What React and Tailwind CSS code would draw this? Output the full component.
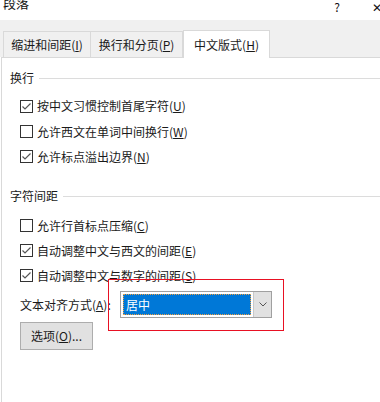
import React from 'react'

const font = { fontFamily: '"Noto Sans CJK SC", "Noto Sans", sans-serif' }

function Box({ checked }) {
  return (
    <svg width="13" height="13" viewBox="0 0 13 13" className="shrink-0">
      <rect x="0.5" y="0.5" width="12" height="12" fill="#fff" stroke="#333" />
      {checked && (
        <polyline points="2.5,6.5 5,9 10.5,3.5" fill="none" stroke="#555" strokeWidth="1.2" />
      )}
    </svg>
  )
}

function Row({ checked, text, k, h }) {
  return (
    <div className={`flex items-center gap-[4px] pl-[18px] ${h}`}>
      <Box checked={checked} />
      <span className="text-[12px] leading-[16px] text-[#1a1a1a]">
        {text}(<u className="underline-offset-1">{k}</u>)
      </span>
    </div>
  )
}

function Heading({ children, mt }) {
  return (
    <div className={`flex items-center gap-[5px] pl-[8px] h-[16px] ${mt}`}>
      <span className="text-[12px] leading-[16px] text-[#1a1a1a]">{children}</span>
      <div className="flex-1 h-px bg-[#dcdcdc]" />
    </div>
  )
}

export default function App() {
  return (
    <div className="relative w-[380px] h-[402px] overflow-hidden bg-white" style={font}>
      {/* title bar */}
      <div className="h-[20px] flex items-start justify-between text-[12px] leading-[16px] text-[#111]">
        <span className="pl-[3px] -mt-[5px] text-[13px]">段落</span>
        <div className="flex gap-[32px] -mt-[1px]">
          <span>?</span>
          <span className="-mr-[2px]">✕</span>
        </div>
      </div>

      {/* tabs */}
      <div className="h-[37px] bg-[#f0f0f0] flex items-end pl-[3px]">
        <div className="h-[26px] w-[88px] border border-b-0 border-[#d9d9d9] flex items-center justify-center text-[12px] text-[#1a1a1a]">
          缩进和间距(<u>I</u>)
        </div>
        <div className="h-[26px] w-[92px] border border-l-0 border-b-0 border-[#d9d9d9] flex items-center justify-center text-[12px] text-[#1a1a1a]">
          换行和分页(<u>P</u>)
        </div>
        <div className="h-[28px] w-[87px] -mb-px bg-white border border-b-0 border-[#d9d9d9] flex items-center justify-center text-[12px] text-[#1a1a1a] relative z-10">
          中文版式(<u>H</u>)
        </div>
      </div>

      {/* panel */}
      <div className="h-[345px] border-t border-l border-[#d9d9d9] ml-px pt-[12px]">
        <Heading>换行</Heading>
        <div className="mt-[7px]">
          <Row checked text="按中文习惯控制首尾字符" k="U" h="h-[26px]" />
          <Row text="允许西文在单词中间换行" k="W" h="h-[25px]" />
          <Row checked text="允许标点溢出边界" k="N" h="h-[25px]" />
        </div>
        <Heading mt="mt-[19px]">字符间距</Heading>
        <div className="mt-[9px]">
          <Row text="允许行首标点压缩" k="C" h="h-[25px]" />
          <Row checked text="自动调整中文与西文的间距" k="E" h="h-[25px]" />
          <Row checked text="自动调整中文与数字的间距" k="S" h="h-[25px]" />
        </div>

        <div className="flex items-center pl-[18px] mt-[3px]">
          <span className="w-[100px] text-[12px] leading-[16px] text-[#1a1a1a]">
            文本对齐方式(<u>A</u>):
          </span>
          <div className="w-[152px] h-[27px] border border-[#a0a0a0] flex bg-white">
            <div className="flex-1 p-[2px]">
              <div className="h-full bg-[#0078d7] border border-dotted border-[#f0a040] flex items-center pl-[2px] text-[12px] text-white leading-[16px]">
                居中
              </div>
            </div>
            <div className="w-[18px] bg-[#e1e1e1] border-l border-[#c8c8c8] flex items-center justify-center">
              <svg width="8" height="5" viewBox="0 0 8 5">
                <polyline points="0.5,0.5 4,4 7.5,0.5" fill="none" stroke="#555" strokeWidth="1" />
              </svg>
            </div>
          </div>
        </div>

        <div className="pl-[18px] mt-[4px]">
          <button className="w-[73px] h-[28px] bg-[#e1e1e1] border border-[#adadad] text-[12px] text-[#1a1a1a] leading-[16px]">
            选项(<u>O</u>)...
          </button>
        </div>
      </div>

      {/* annotation */}
      <div className="absolute left-[108px] top-[279px] w-[176px] h-[52px] border border-[#e81123] pointer-events-none" />
    </div>
  )
}
